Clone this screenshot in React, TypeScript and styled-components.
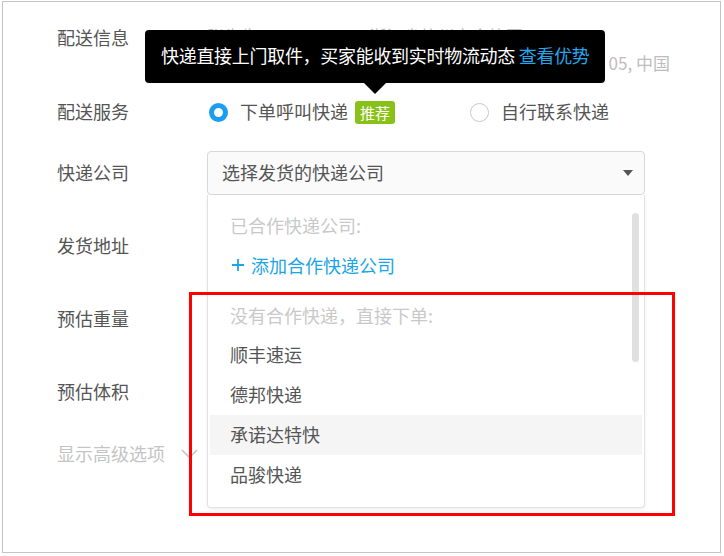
import React from 'react';
import styled, { createGlobalStyle } from 'styled-components';

const GlobalStyle = createGlobalStyle`
  html, body {
    margin: 0;
    padding: 0;
    background: #ffffff;
  }
  body {
    font-family: "Noto Sans CJK SC", "Noto Sans", sans-serif;
    -webkit-font-smoothing: antialiased;
  }
`;

const Frame = styled.div`
  position: relative;
  box-sizing: border-box;
  width: 719px;
  height: 552px;
  margin: 1px 0 0 2px;
  padding: 20px 0 0 54px;
  border: 1px solid #c4c4c4;
  background: #ffffff;
`;

const Row = styled.div<{ $gap: number; $align?: string }>`
  display: flex;
  align-items: ${props => props.$align || 'center'};
  margin-bottom: ${props => props.$gap}px;
`;

// negative top margin lifts the glyphs 1px so they sit on the reference's centre line
const Label = styled.div<{ $height: number }>`
  width: 150px;
  flex-shrink: 0;
  margin-top: -2px;
  font-size: 18px;
  line-height: ${props => props.$height}px;
  color: #555555;
`;

const AddressValue = styled.div`
  width: 463px;
  font-size: 17px;
  line-height: 27px;
  color: #bdbdbd;
  white-space: nowrap;
`;

const AddressLine = styled.div<{ $right?: boolean }>`
  text-align: ${props => (props.$right ? 'right' : 'left')};
`;

const RadioGroup = styled.div`
  display: flex;
  align-items: center;
  height: 32px;
  padding-left: 2px;
`;

const RadioOption = styled.label<{ $offset?: number }>`
  display: flex;
  align-items: center;
  margin-left: ${props => props.$offset || 0}px;
  font-size: 18px;
  color: #555555;
`;

const RadioText = styled.span`
  padding-bottom: 2px;
`;

const RadioDot = styled.span<{ $checked?: boolean }>`
  box-sizing: border-box;
  width: 19px;
  height: 19px;
  margin-right: 12px;
  border-radius: 50%;
  background: #ffffff;
  border: ${props => (props.$checked ? '5px solid #1c9ef0' : '1px solid #c9c9c9')};
`;

const Badge = styled.span`
  position: relative;
  display: inline-flex;
  align-items: center;
  height: 23px;
  margin-left: 7px;
  padding: 0 5px;
  border-radius: 3px;
  background: #88c218;
  color: #ffffff;
  font-size: 15px;
`;

const Tooltip = styled.div`
  position: absolute;
  left: 50%;
  bottom: calc(100% + 18px);
  transform: translateX(-50%);
  box-sizing: border-box;
  width: 460px;
  height: 53px;
  padding: 0 0 3px 16px;
  border-radius: 4px;
  background: #000000;
  color: #ffffff;
  font-size: 18px;
  letter-spacing: -0.3px;
  line-height: 50px;
  white-space: nowrap;
  z-index: 5;

  &::after {
    content: '';
    position: absolute;
    top: 100%;
    left: 50%;
    margin-left: -11px;
    border: 11px solid transparent;
    border-top-color: #000000;
    border-bottom: 0;
  }
`;

const TooltipLink = styled.span`
  color: #23a6ec;
`;

const SelectWrap = styled.div`
  position: relative;
  width: 438px;
`;

const SelectBox = styled.div`
  box-sizing: border-box;
  display: flex;
  align-items: center;
  justify-content: space-between;
  height: 44px;
  padding: 0 11px 2px 14px;
  border: 1px solid #d8d8d8;
  border-radius: 4px;
  background: #fafafa;
  font-size: 18px;
  color: #555555;
`;

const Caret = styled.span`
  width: 0;
  height: 0;
  margin-top: 2px;
  border-left: 5px solid transparent;
  border-right: 5px solid transparent;
  border-top: 6px solid #555555;
`;

const Dropdown = styled.div`
  position: absolute;
  top: 100%;
  left: 0;
  right: 0;
  box-sizing: border-box;
  height: 313px;
  padding: 10px 2px 14px;
  border: 1px solid #e2e2e2;
  border-top: none;
  border-radius: 0 0 4px 4px;
  background: #ffffff;
  box-shadow: 0 2px 4px rgba(0, 0, 0, 0.06);
  z-index: 3;
`;

const GroupTitle = styled.div<{ $spaced?: boolean }>`
  height: 40px;
  margin-top: ${props => (props.$spaced ? 10 : 0)}px;
  padding-left: 20px;
  font-size: 18px;
  line-height: 40px;
  color: #c9c9c9;
`;

const AddLink = styled.div`
  display: flex;
  align-items: center;
  gap: 6px;
  height: 40px;
  padding-left: 21px;
  font-size: 18px;
  color: #1aa5e8;
`;

const Item = styled.div<{ $active?: boolean }>`
  height: 40px;
  padding-left: 20px;
  font-size: 18px;
  line-height: 38px;
  color: #555555;
  background: ${props => (props.$active ? '#f5f5f5' : 'transparent')};
`;

const ScrollThumb = styled.div`
  position: absolute;
  top: 18px;
  right: 5px;
  width: 7px;
  height: 149px;
  border-radius: 4px;
  background: #e0e0e0;
`;

const Field = styled.div`
  box-sizing: border-box;
  width: 438px;
  height: 44px;
  border: 1px solid #d8d8d8;
  border-radius: 4px;
`;

const AdvancedToggle = styled.div`
  display: flex;
  align-items: center;
  gap: 16px;
  height: 44px;
  font-size: 18px;
  color: #c4c4c4;
`;

const ToggleText = styled.span`
  padding-bottom: 2px;
`;

const Annotation = styled.div`
  position: absolute;
  left: 186px;
  top: 290px;
  box-sizing: border-box;
  width: 486px;
  height: 224px;
  border: 3px solid #ff0000;
  z-index: 10;
  pointer-events: none;
`;

const couriers = ['顺丰速运', '德邦快递', '承诺达特快', '品骏快递'];

const App: React.FC = () => {
  return (
    <>
      <GlobalStyle />
      <Frame>
        <Row $gap={20} $align="flex-start">
          <Label $height={34}>配送信息</Label>
          <AddressValue>
            <AddressLine>张先生 13800138000 浙江省杭州市余杭区</AddressLine>
            <AddressLine $right>浙江省杭州市余杭区五常街道文一西路969号　05, 中国</AddressLine>
          </AddressValue>
        </Row>

        <Row $gap={23}>
          <Label $height={32}>配送服务</Label>
          <RadioGroup>
            <RadioOption>
              <RadioDot $checked />
              <RadioText>下单呼叫快递</RadioText>
            </RadioOption>
            <Badge>
              推荐
              <Tooltip>
                快递直接上门取件，买家能收到实时物流动态 <TooltipLink>查看优势</TooltipLink>
              </Tooltip>
            </Badge>
            <RadioOption $offset={75}>
              <RadioDot />
              <RadioText>自行联系快递</RadioText>
            </RadioOption>
          </RadioGroup>
        </Row>

        <Row $gap={29}>
          <Label $height={44}>快递公司</Label>
          <SelectWrap>
            <SelectBox>
              选择发货的快递公司
              <Caret />
            </SelectBox>
            <Dropdown>
              <GroupTitle>已合作快递公司:</GroupTitle>
              <AddLink>
                <svg width="14" height="14" viewBox="0 0 14 14">
                  <path d="M7 1v12M1 7h12" stroke="#1aa5e8" strokeWidth="1.8" fill="none" />
                </svg>
                添加合作快递公司
              </AddLink>
              <GroupTitle $spaced>没有合作快递，直接下单:</GroupTitle>
              {couriers.map((name, i) => (
                <Item key={name} $active={i === 2}>
                  {name}
                </Item>
              ))}
              <ScrollThumb />
            </Dropdown>
          </SelectWrap>
        </Row>

        <Row $gap={29}>
          <Label $height={44}>发货地址</Label>
          <Field />
        </Row>

        <Row $gap={29}>
          <Label $height={44}>预估重量</Label>
          <Field />
        </Row>

        <Row $gap={18}>
          <Label $height={44}>预估体积</Label>
          <Field />
        </Row>

        <AdvancedToggle>
          <ToggleText>显示高级选项</ToggleText>
          <svg width="17" height="10" viewBox="0 0 17 10">
            <polyline points="1,1 8.5,8.5 16,1" stroke="#c4c4c4" strokeWidth="1.6" fill="none" />
          </svg>
        </AdvancedToggle>

        <Annotation />
      </Frame>
    </>
  );
};

export default App;
